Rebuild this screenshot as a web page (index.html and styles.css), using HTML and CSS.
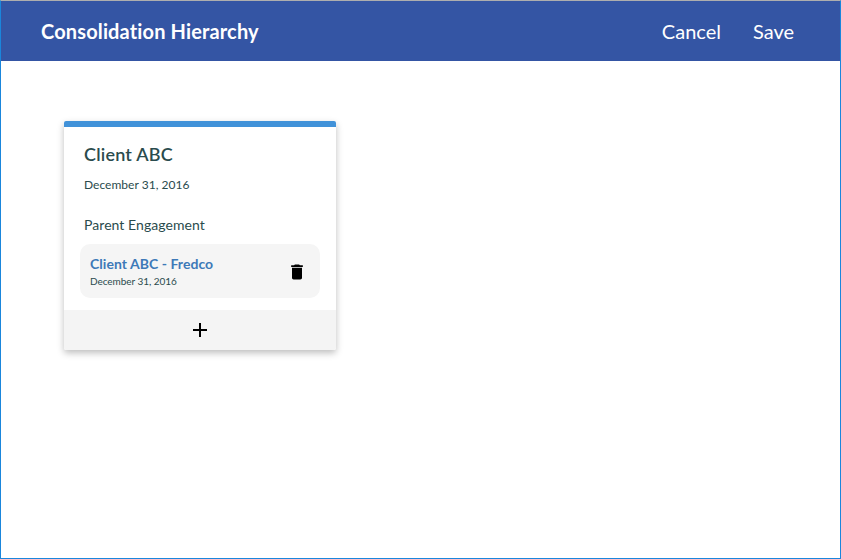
FILE: index.html
```html
<!DOCTYPE html>
<html lang="en">
<head>
<meta charset="utf-8">
<title>Consolidation Hierarchy</title>
<link rel="stylesheet" href="styles.css">
</head>
<body>
<div class="window">
  <header class="topbar">
    <h1 class="title">Consolidation Hierarchy</h1>
    <nav class="actions"><button>Cancel</button><button>Save</button></nav>
  </header>
  <main class="content">
    <section class="card">
      <div class="card-body">
        <h2 class="client">Client ABC</h2>
        <p class="date">December 31, 2016</p>
        <h3 class="label">Parent Engagement</h3>
        <div class="engagement">
          <div class="info">
            <a class="name">Client ABC - Fredco</a>
            <p class="small-date">December 31, 2016</p>
          </div>
          <svg class="trash" viewBox="0 0 24 24"><path d="M6 19c0 1.1.9 2 2 2h8c1.1 0 2-.9 2-2V7H6v12zM19 4h-3.5l-1-1h-5l-1 1H5v2h14V4z"/></svg>
        </div>
      </div>
      <button class="add" aria-label="Add"><svg viewBox="0 0 24 24"><path d="M19 13h-6v6h-2v-6H5v-2h6V5h2v6h6v2z"/></svg></button>
    </section>
  </main>
</div>
</body>
</html>
```
FILE: styles.css
```css
* { box-sizing: border-box; margin: 0; }
body { font-family: Lato, sans-serif; font-variant-ligatures: none; color: #2a4b4d; background: #fff; }
button { font: inherit; color: inherit; border: 0; padding: 0; background: none; }
.window { height: 559px; border: 1px solid #1a86dc; border-top-color: #aeaeae; }
.topbar { height: 60px; padding: 0 46px 0 40px; display: flex; align-items: center; justify-content: space-between; background: #3455a4; color: #fff; }
.title { font-size: 20px; line-height: 24px; font-weight: 700; letter-spacing: .14px; }
.actions { display: flex; gap: 32px; font-size: 20px; line-height: 24px; }
.content { padding: 60px 63px; }
.card { width: 272px; height: 229px; display: flex; flex-direction: column; border-top: 6px solid #4192d9; border-radius: 2px; box-shadow: 0 3px 7px rgba(0,0,0,.26); overflow: hidden; }
.card-body { flex: 1; padding: 16px 16px 0; }
.client { padding-left: 4px; font-size: 18px; line-height: 22px; font-weight: 600; letter-spacing: .2px; }
.date { padding-left: 4px; margin-top: 12px; font-size: 12px; line-height: 16px; letter-spacing: .03px; }
.label { padding-left: 4px; margin-top: 23px; font-size: 14px; line-height: 18px; font-weight: 400; letter-spacing: .06px; }
.engagement { height: 54px; margin-top: 10px; padding: 2px 11px 0 10px; display: flex; align-items: center; justify-content: space-between; background: #f5f5f5; border-radius: 10px; }
.info { padding-bottom: 2px; }
.name { display: block; color: #3d79b8; font-size: 14px; line-height: 18px; font-weight: 700; letter-spacing: .04px; }
.small-date { font-size: 10px; line-height: 14px; margin-top: 1px; letter-spacing: -.05px; }
.trash { width: 20px; height: 20px; margin-right: 2px; fill: #000; }
.add { height: 40px; display: flex; align-items: center; justify-content: center; background: #f4f4f4; }
.add svg { width: 24px; height: 24px; fill: #000; }
```
